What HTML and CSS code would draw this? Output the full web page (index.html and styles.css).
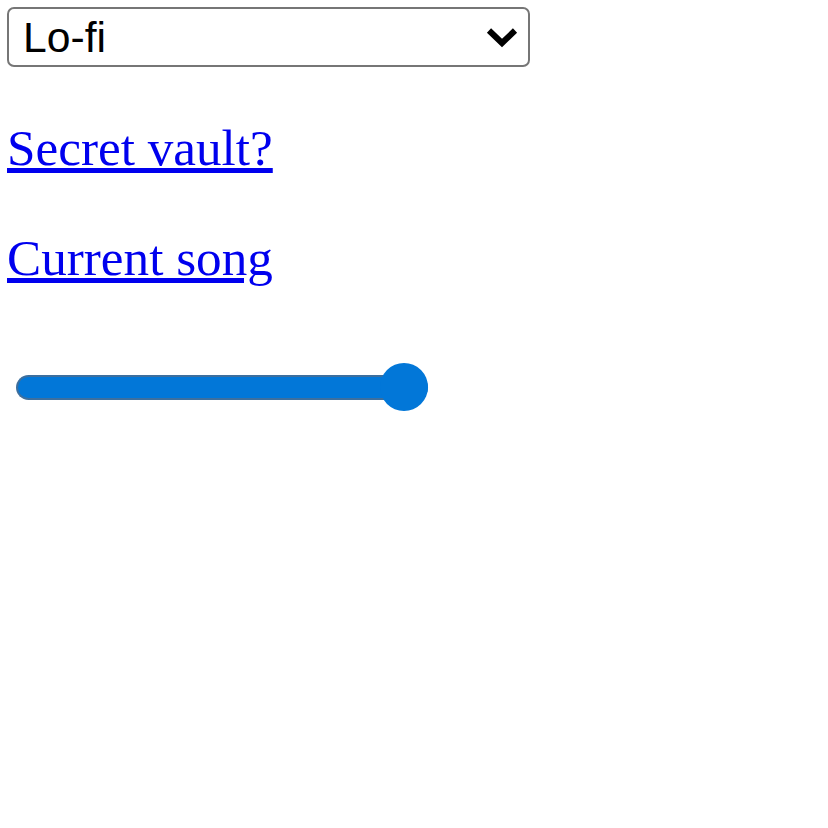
FILE: index.html
```html
<!DOCTYPE html>
<html>
<head>
<meta charset="utf-8">
<title>Music</title>
<link rel="stylesheet" href="styles.css">
</head>
<body>
<div class="picker">
  <select class="genre">
    <option>Lo-fi</option>
    <option>Jazz</option>
    <option>Classical</option>
  </select>
  <svg class="chevron" width="32" height="21" viewBox="0 0 32 21" aria-hidden="true">
    <polyline points="3,3.5 16,16 29,3.5" fill="none" stroke="#000" stroke-width="6" stroke-linejoin="miter" stroke-linecap="butt"/>
  </svg>
</div>
<p class="link-row first"><a href="#">Secret vault?</a></p>
<p class="link-row"><a href="#">Current song</a></p>
<input class="volume" type="range" min="0" max="100" value="100">
</body>
</html>
```
FILE: styles.css
```css
html, body {
  margin: 0;
  padding: 0;
  background: #fff;
}

.picker {
  position: relative;
  width: 523px;
  margin: 7px 0 0 7px;
}

.genre {
  display: block;
  -webkit-appearance: none;
  appearance: none;
  box-sizing: border-box;
  width: 523px;
  height: 60px;
  margin: 0;
  padding: 0 0 0 14px;
  border: 2px solid #767676;
  border-radius: 7px;
  background: #fff;
  color: #000;
  font-family: "Liberation Sans", Arial, sans-serif;
  font-size: 42.67px;
  outline: none;
}

.chevron {
  position: absolute;
  left: 479px;
  top: 20px;
  pointer-events: none;
}

.link-row {
  margin: 0;
  font-family: "Liberation Serif", "Times New Roman", serif;
  font-size: 51.2px;
  line-height: normal;
  padding-left: 7px;
}

.link-row.first {
  margin-top: 51px;
  margin-bottom: 51.2px;
}

.link-row a {
  color: #0000ee;
  text-decoration: underline;
}

.volume {
  display: block;
  -webkit-appearance: none;
  appearance: none;
  width: 412px;
  height: 48px;
  margin: 76px 0 0 16px;
  padding: 0;
  background: transparent;
}

.volume::-webkit-slider-runnable-track {
  box-sizing: border-box;
  height: 25px;
  border: 2px solid #3d6f9e;
  border-right: 0;
  border-radius: 13px;
  background: #0277d8;
}

.volume::-webkit-slider-thumb {
  -webkit-appearance: none;
  appearance: none;
  width: 48px;
  height: 48px;
  border: none;
  border-radius: 50%;
  background: #0277d8;
  margin-top: -13.5px;
}
```
